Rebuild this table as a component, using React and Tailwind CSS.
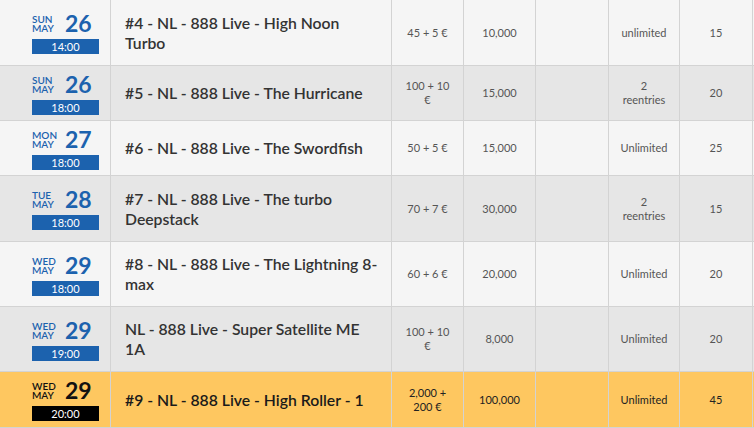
import React from "react";

const rows = [
  { dow: "SUN", day: "26", time: "14:00", name: ["#4 - NL - 888 Live - High Noon", "Turbo"], buy: ["45 + 5 €"], chips: "10,000", re: ["unlimited"], lvl: "15", h: "h-[66px]", bg: "bg-[#f5f5f5]" },
  { dow: "SUN", day: "26", time: "18:00", name: ["#5 - NL - 888 Live - The Hurricane"], buy: ["100 + 10", "€"], chips: "15,000", re: ["2", "reentries"], lvl: "20", h: "h-[55px]", bg: "bg-[#e6e6e6]" },
  { dow: "MON", day: "27", time: "18:00", name: ["#6 - NL - 888 Live - The Swordfish"], buy: ["50 + 5 €"], chips: "15,000", re: ["Unlimited"], lvl: "25", h: "h-[55px]", bg: "bg-[#f5f5f5]" },
  { dow: "TUE", day: "28", time: "18:00", name: ["#7 - NL - 888 Live - The turbo", "Deepstack"], buy: ["70 + 7 €"], chips: "30,000", re: ["2", "reentries"], lvl: "15", h: "h-[66px]", bg: "bg-[#e6e6e6]" },
  { dow: "WED", day: "29", time: "18:00", name: ["#8 - NL - 888 Live - The Lightning 8-", "max"], buy: ["60 + 6 €"], chips: "20,000", re: ["Unlimited"], lvl: "20", h: "h-[65px]", bg: "bg-[#f5f5f5]" },
  { dow: "WED", day: "29", time: "19:00", name: ["NL - 888 Live - Super Satellite ME", "1A"], buy: ["100 + 10", "€"], chips: "8,000", re: ["Unlimited"], lvl: "20", h: "h-[65px]", bg: "bg-[#e6e6e6]" },
  { dow: "WED", day: "29", time: "20:00", name: ["#9 - NL - 888 Live - High Roller - 1"], buy: ["2,000 +", "200 €"], chips: "100,000", re: ["Unlimited"], lvl: "45", h: "h-[56px]", bg: "bg-[#fec760]", hl: true },
];

function Lines({ lines }) {
  return lines.map((l, i) => (
    <React.Fragment key={i}>
      {i > 0 && <br />}
      {l}
    </React.Fragment>
  ));
}

function SmallCell({ w, children, hl }) {
  return (
    <div className={`${w} shrink-0 border-r border-[#d3d3d3] flex items-center justify-center text-center text-[11px] leading-[14px] ${hl ? "text-[#222]" : "text-[#555]"}`}>
      <div>{children}</div>
    </div>
  );
}

function Row({ r }) {
  const blue = r.hl ? "text-[#111]" : "text-[#1c62ae]";
  const barBg = r.hl ? "bg-[#000]" : "bg-[#1c62ae]";
  return (
    <div className={`flex ${r.h} ${r.bg} border-b border-[#d3d3d3]`}>
      <div className="w-[111px] shrink-0 border-r border-[#d3d3d3] flex items-center pl-[32px]">
        <div className="w-[67px] flex flex-col">
          <div className="h-[25px] flex items-center">
            <div className={`w-[33px] text-[10px] leading-[9px] font-semibold ${blue} pt-[1px]`}>
              <div>{r.dow}</div>
              <div>MAY</div>
            </div>
            <div className={`text-[23px] leading-[25px] font-bold ${blue}`}>{r.day}</div>
          </div>
          <div className={`mt-[3px] h-[15px] ${barBg} text-white text-[11px] leading-[15px] text-center`}>{r.time}</div>
        </div>
      </div>
      <div className={`w-[281px] shrink-0 border-r border-[#d3d3d3] flex items-center pl-[14px] text-[15.75px] leading-[20px] font-semibold whitespace-nowrap ${r.hl ? "text-[#1a1a1a]" : "text-[#333]"}`}>
        <div>
          <Lines lines={r.name} />
        </div>
      </div>
      <SmallCell w="w-[72px]" hl={r.hl}><Lines lines={r.buy} /></SmallCell>
      <SmallCell w="w-[72px]" hl={r.hl}>{r.chips}</SmallCell>
      <SmallCell w="w-[73px]" hl={r.hl}>{""}</SmallCell>
      <SmallCell w="w-[71px]" hl={r.hl}><Lines lines={r.re} /></SmallCell>
      <SmallCell w="w-[73px]" hl={r.hl}>{r.lvl}</SmallCell>
      <div className="flex-1" />
    </div>
  );
}

export default function App() {
  return (
    <div className="w-[754px] h-[428px] overflow-hidden bg-white" style={{ fontFamily: "Lato, 'Noto Sans', sans-serif" }}>
      {rows.map((r, i) => (
        <Row key={i} r={r} />
      ))}
    </div>
  );
}
